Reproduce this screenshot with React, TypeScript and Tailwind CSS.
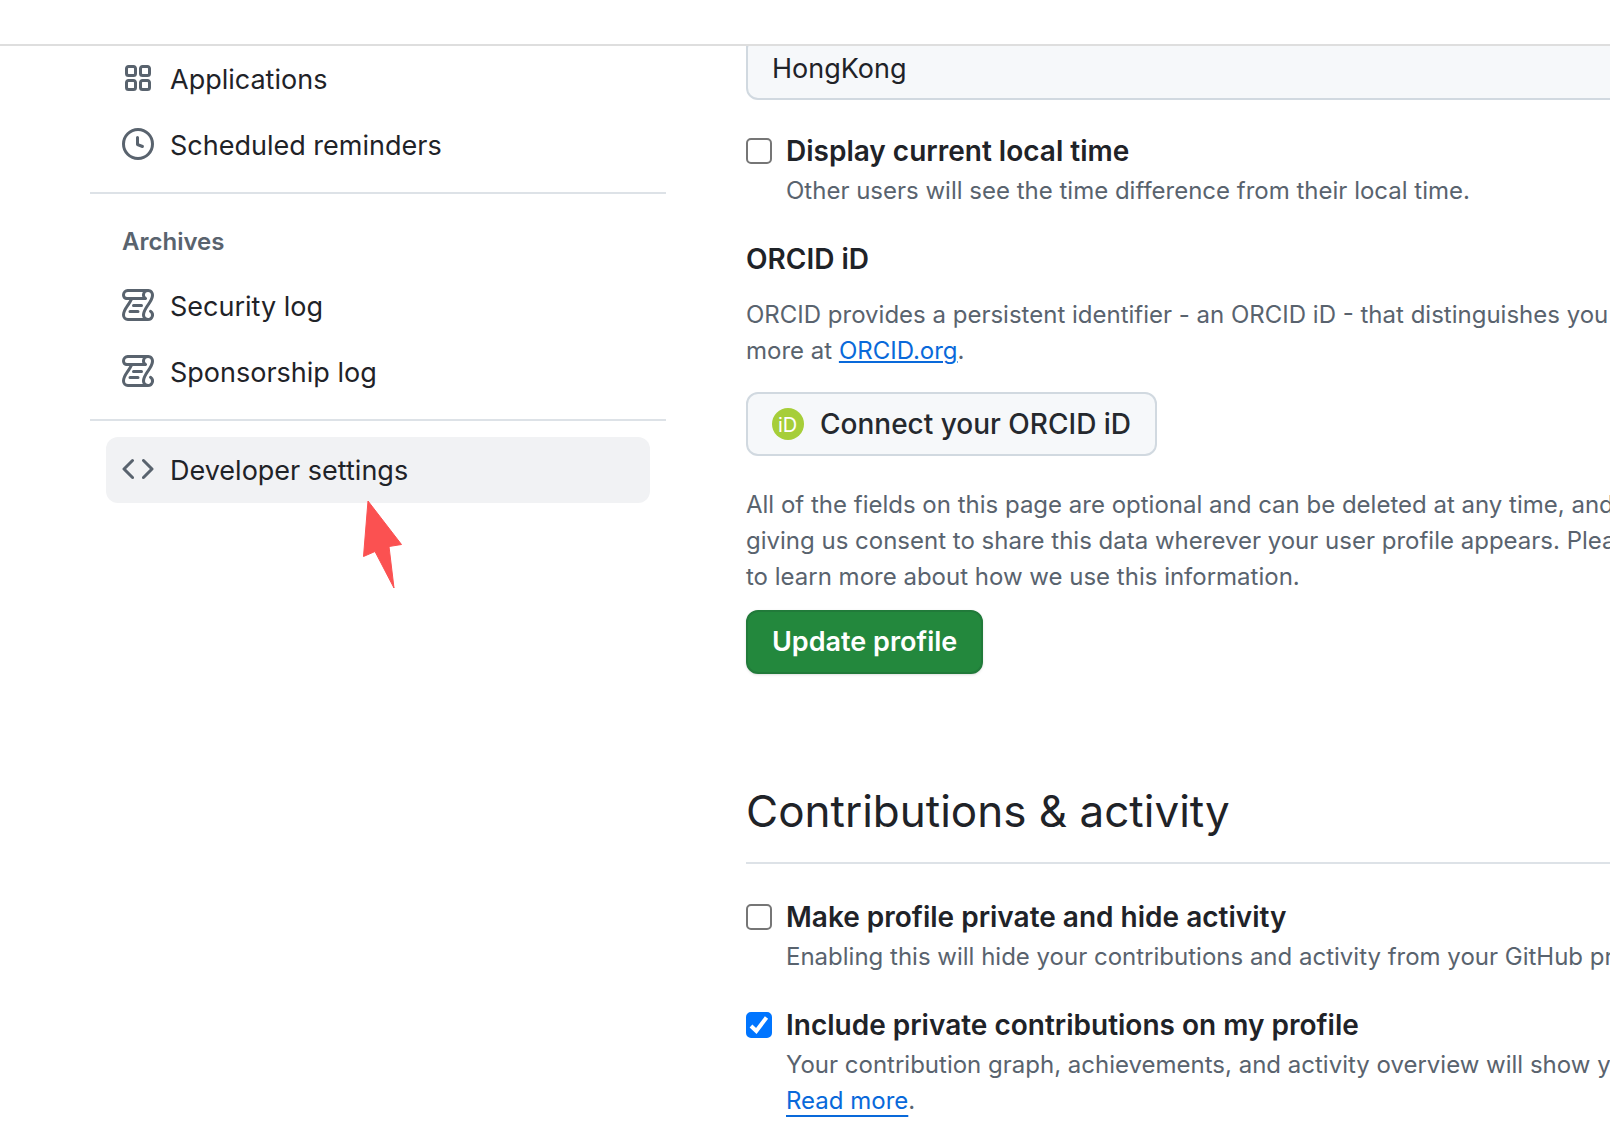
import type { ReactNode } from "react";
import clsx from "clsx";

const icons = {
  apps: "M1.5 3.25c0-.966.784-1.75 1.75-1.75h2.5c.966 0 1.75.784 1.75 1.75v2.5A1.75 1.75 0 0 1 5.75 7.5h-2.5A1.75 1.75 0 0 1 1.5 5.75Zm7 0c0-.966.784-1.75 1.75-1.75h2.5c.966 0 1.75.784 1.75 1.75v2.5a1.75 1.75 0 0 1-1.75 1.75h-2.5A1.75 1.75 0 0 1 8.5 5.75Zm-7 7c0-.966.784-1.75 1.75-1.75h2.5c.966 0 1.75.784 1.75 1.75v2.5a1.75 1.75 0 0 1-1.75 1.75h-2.5a1.75 1.75 0 0 1-1.75-1.75Zm7 0c0-.966.784-1.75 1.75-1.75h2.5c.966 0 1.75.784 1.75 1.75v2.5a1.75 1.75 0 0 1-1.75 1.75h-2.5a1.75 1.75 0 0 1-1.75-1.75ZM3.25 3a.25.25 0 0 0-.25.25v2.5c0 .138.112.25.25.25h2.5A.25.25 0 0 0 6 5.75v-2.5A.25.25 0 0 0 5.75 3Zm7 0a.25.25 0 0 0-.25.25v2.5c0 .138.112.25.25.25h2.5a.25.25 0 0 0 .25-.25v-2.5a.25.25 0 0 0-.25-.25Zm-7 7a.25.25 0 0 0-.25.25v2.5c0 .138.112.25.25.25h2.5a.25.25 0 0 0 .25-.25v-2.5a.25.25 0 0 0-.25-.25Zm7 0a.25.25 0 0 0-.25.25v2.5c0 .138.112.25.25.25h2.5a.25.25 0 0 0 .25-.25v-2.5a.25.25 0 0 0-.25-.25Z",
  clock:
    "M8 0a8 8 0 1 1 0 16A8 8 0 0 1 8 0ZM1.5 8a6.5 6.5 0 1 0 13 0 6.5 6.5 0 0 0-13 0Zm7-3.25v2.992l2.028.812a.75.75 0 0 1-.557 1.392l-2.5-1A.751.751 0 0 1 7 8.25v-3.5a.75.75 0 0 1 1.5 0Z",
  log: "M5 8.25a.75.75 0 0 1 .75-.75h4a.75.75 0 0 1 0 1.5h-4A.75.75 0 0 1 5 8.25ZM4 10.5A.75.75 0 0 0 4 12h4a.75.75 0 0 0 0-1.5H4ZM13-.005c1.654 0 3 1.328 3 3 0 .982-.338 1.933-.783 2.818-.443.879-1.028 1.758-1.582 2.588l-.011.017c-.568.853-1.104 1.659-1.501 2.446-.398.789-.623 1.494-.623 2.136a1.5 1.5 0 1 0 2.333-1.248.75.75 0 0 1 .834-1.246A3 3 0 0 1 13 16H3a3 3 0 0 1-3-3c0-1.582.891-3.135 1.777-4.506.209-.322.418-.637.623-.946.473-.709.923-1.386 1.287-2.048H2.51c-.576 0-1.381-.133-1.907-.783A2.68 2.68 0 0 1 0 2.995a3 3 0 0 1 3-3Zm0 1.5a1.5 1.5 0 0 0-1.5 1.5c0 .476.223.834.667 1.132A.75.75 0 0 1 11.75 5.5H5.368c-.467 1.003-1.141 2.015-1.773 2.963-.192.289-.381.571-.558.845C2.13 10.711 1.5 11.916 1.5 13A1.5 1.5 0 0 0 3 14.5h7.401A2.989 2.989 0 0 1 10 13c0-.979.338-1.928.784-2.812.441-.874 1.023-1.748 1.575-2.576l.017-.026c.568-.853 1.103-1.658 1.501-2.448.398-.79.623-1.497.623-2.143 0-.838-.669-1.5-1.5-1.5Zm-10 0a1.5 1.5 0 0 0-1.5 1.5c0 .321.1.569.27.778.097.12.325.227.74.227h7.674A2.737 2.737 0 0 1 10 2.995c0-.546.146-1.059.401-1.5Z",
  code: "m11.28 3.22 4.25 4.25a.75.75 0 0 1 0 1.06l-4.25 4.25a.749.749 0 0 1-1.275-.326.749.749 0 0 1 .215-.734L13.94 8l-3.72-3.72a.749.749 0 0 1 .326-1.275.749.749 0 0 1 .734.215Zm-6.56 0a.751.751 0 0 1 1.042.018.751.751 0 0 1 .018 1.042L2.06 8l3.72 3.72a.749.749 0 0 1-.326 1.275.749.749 0 0 1-.734-.215L.47 8.53a.75.75 0 0 1 0-1.06Z",
};

interface NavItemProps {
  icon: keyof typeof icons;
  active?: boolean;
  children: ReactNode;
}

const NavItem = ({ icon, active, children }: NavItemProps) => (
  <li>
    <a
      href="#"
      className={clsx(
        "flex items-start gap-4 px-4 pt-3.5 pb-3 rounded-xl text-[27px] leading-10",
        active && "bg-[#f1f2f4]"
      )}
    >
      <svg
        viewBox="0 0 16 16"
        aria-hidden="true"
        className="size-8 mt-0.5 shrink-0 fill-[#59636e]"
      >
        <path d={icons[icon]} />
      </svg>
      {children}
    </a>
  </li>
);

const Divider = () => <hr className="mt-3.5 border-t-2 border-[#dde2e7]" />;

// red arrow that points up at the developer settings entry
const Pointer = () => (
  <svg
    viewBox="0 0 42 90"
    aria-hidden="true"
    className="absolute left-[272px] top-[63px] w-[42px] h-[90px] fill-[#fb5151] stroke-[#fb5151]"
    strokeLinejoin="round"
  >
    <path d="M6 1 L39.500 44.500 L27 46.500 L32 88 L13 51.500 L1.500 56.500 Z" />
  </svg>
);

const Sidebar = () => (
  <nav aria-label="Settings" className="w-[576px] shrink-0">
    <ul className="px-4">
      <NavItem icon="apps">Applications</NavItem>
      <NavItem icon="clock">Scheduled reminders</NavItem>
    </ul>
    <Divider />
    <h3 className="px-8 pt-[30px] pb-[13px] text-2xl leading-9 font-semibold text-[#59636e]">
      Archives
    </h3>
    <ul className="px-4">
      <NavItem icon="log">Security log</NavItem>
      <NavItem icon="log">Sponsorship log</NavItem>
    </ul>
    <Divider />
    <div className="relative mt-4 px-4">
      <ul>
        <NavItem icon="code" active>
          Developer settings
        </NavItem>
      </ul>
      <Pointer />
    </div>
  </nav>
);

interface CheckFieldProps {
  id: string;
  label: string;
  checked?: boolean;
  children: ReactNode;
}

const CheckField = ({ id, label, checked, children }: CheckFieldProps) => (
  <div className="flex gap-3.5">
    <span className="grid size-[26px] mt-1.5 shrink-0">
      <input
        id={id}
        type="checkbox"
        defaultChecked={checked}
        aria-describedby={`${id}-note`}
        className="peer col-start-1 row-start-1 size-[26px] appearance-none rounded-[5px] border-2 border-[#767676] bg-white checked:border-[#0075ff] checked:bg-[#0075ff]"
      />
      <svg
        viewBox="0 0 26 26"
        aria-hidden="true"
        className="col-start-1 row-start-1 pointer-events-none invisible peer-checked:visible fill-none stroke-white"
        strokeWidth="4"
      >
        <path d="M5 14 L10.300 19 L20.500 5.500" />
      </svg>
    </span>
    <div>
      <label htmlFor={id} className="block text-[28px] leading-[38px] font-semibold">
        {label}
      </label>
      <p
        id={`${id}-note`}
        className="mt-[3px] text-2xl leading-9 text-[#59636e] whitespace-nowrap"
      >
        {children}
      </p>
    </div>
  </div>
);

const OrcidLogo = () => (
  <svg viewBox="0 0 32 32" aria-hidden="true" className="size-8 shrink-0">
    <circle cx="16" cy="16" r="16" fill="#a6ce39" />
    <text x="6" y="24" fontSize="20" fontWeight="400" fill="#fff">
      iD
    </text>
  </svg>
);

const Profile = () => (
  <main className="flex-1 min-w-0">
    {/* the field is partly scrolled under the top bar */}
    <input
      type="text"
      aria-label="Location"
      defaultValue="HongKong"
      className="block -mt-2.5 w-[1200px] h-16 rounded-xl border-2 border-[#d1d9e0] bg-[#f6f8fa] px-6 text-[27px]"
    />
    <div className="mt-8">
      <CheckField id="local-time" label="Display current local time">
        Other users will see the time difference from their local time.
      </CheckField>
    </div>

    <h4 className="mt-[30px] text-[28px] leading-10 font-semibold">ORCID iD</h4>
    <p className="mt-[18px] text-2xl leading-9 text-[#59636e] whitespace-nowrap">
      ORCID provides a persistent identifier - an ORCID iD - that distinguishes you
      <br />
      more at{" "}
      <a href="#" className="text-[#0969da] underline decoration-2 underline-offset-2">
        ORCID.org
      </a>
      .
    </p>
    <button
      type="button"
      className="mt-[23px] flex h-16 items-center gap-4 rounded-xl border-2 border-[#d1d9e0] bg-[#f6f8fa] px-6 text-[28px] font-medium text-[#25292e]"
    >
      <OrcidLogo />
      Connect your ORCID iD
    </button>

    <p className="mt-[31px] text-2xl leading-9 text-[#59636e] whitespace-nowrap">
      All of the fields on this page are optional and can be deleted at any time, and
      <br />
      giving us consent to share this data wherever your user profile appears. Please
      <br />
      to learn more about how we use this information.
    </p>
    <button
      type="submit"
      className="mt-[15px] h-16 rounded-xl border-2 border-[#217a3a] bg-[#23883d] px-6 text-[27px] font-semibold text-white shadow-sm"
    >
      Update profile
    </button>

    <h2 className="mt-[101px] border-b-2 border-[#dde2e7] pb-[15px] text-[44px] leading-[72px]">
      Contributions &amp; activity
    </h2>
    <div className="mt-[34px] flex flex-col gap-[31px]">
      <CheckField id="private-profile" label="Make profile private and hide activity">
        Enabling this will hide your contributions and activity from your GitHub profile
      </CheckField>
      <CheckField
        id="private-contributions"
        label="Include private contributions on my profile"
        checked
      >
        Your contribution graph, achievements, and activity overview will show your
        <br />
        <a href="#" className="text-[#0969da] underline decoration-2 underline-offset-[6px]">
          Read more
        </a>
        .
      </CheckField>
    </div>
  </main>
);

const App = () => {
  return (
    <div className="h-screen overflow-hidden bg-white font-['Inter',sans-serif] text-[#1f2328]">
      <header className="relative z-10 h-[46px] border-b-2 border-[#dedede] bg-white" />
      <div className="flex gap-20 pl-[90px]">
        <Sidebar />
        <Profile />
      </div>
    </div>
  );
};

export default App;
